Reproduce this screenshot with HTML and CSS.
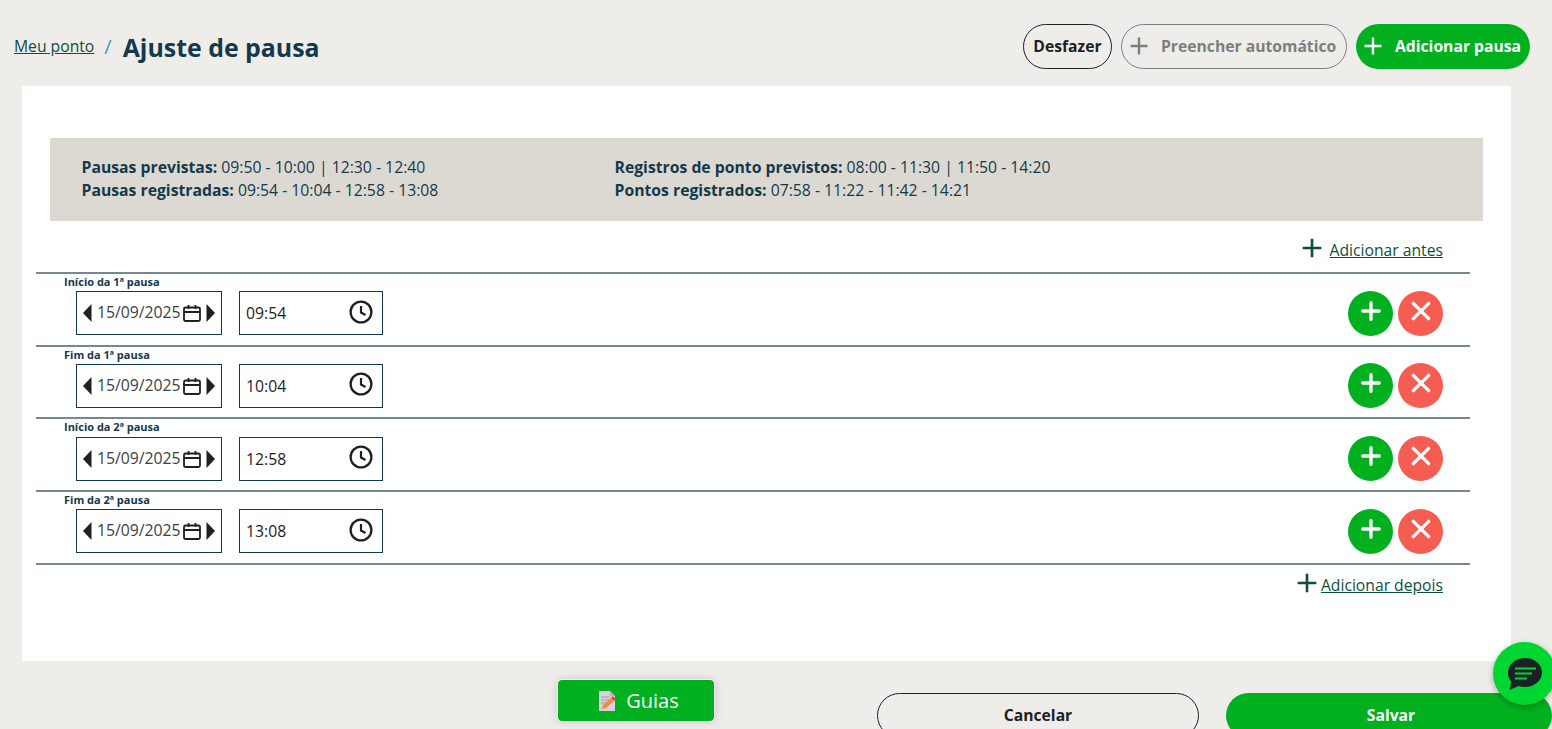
FILE: index.html
```html
<!DOCTYPE html>
<html lang="pt-BR">
<head>
  <meta charset="UTF-8">
  <meta name="viewport" content="width=device-width, initial-scale=1">
  <title>Ajuste de pausa</title>
  <link rel="stylesheet" href="styles.css">
</head>
<body>
  <svg class="sprites" width="0" height="0">
    <symbol id="i-plus" viewBox="0 0 20 20"><path d="M10 1.500v17M1.500 10h17" fill="none" stroke="currentColor" stroke-width="2.400"/></symbol>
    <symbol id="i-left" viewBox="0 0 9 18"><path d="M8.500 0v18L0 9z" fill="currentColor"/></symbol>
    <symbol id="i-right" viewBox="0 0 9 18"><path d="M.5 0v18L9 9z" fill="currentColor"/></symbol>
    <symbol id="i-cal" viewBox="0 0 18 18"><path d="M2.500 3.500h13a1.500 1.500 0 0 1 1.500 1.500v10.500a1.500 1.500 0 0 1-1.500 1.500h-13A1.500 1.500 0 0 1 1 15.500V5a1.500 1.500 0 0 1 1.500-1.500zM1 8h16M5.500 1v4M12.500 1v4" fill="none" stroke="currentColor" stroke-width="1.800"/></symbol>
    <symbol id="i-clock" viewBox="0 0 24 24"><circle cx="12" cy="12" r="10.400" fill="none" stroke="currentColor" stroke-width="2.300"/><path d="M12 6v6.500l4.500 2.500" fill="none" stroke="currentColor" stroke-width="2.200"/></symbol>
    <symbol id="i-x" viewBox="0 0 20 20"><path d="M3 3l14 14M17 3L3 17" fill="none" stroke="currentColor" stroke-width="3" stroke-linecap="round"/></symbol>
    <symbol id="i-add" viewBox="0 0 20 20"><path d="M10 2.500v15M2.500 10h15" fill="none" stroke="currentColor" stroke-width="3" stroke-linecap="round"/></symbol>
  </svg>

  <header class="top">
    <nav class="crumbs">
      <a href="#" class="crumb-link">Meu ponto</a>
      <span class="crumb-sep">/</span>
      <h1>Ajuste de pausa</h1>
    </nav>
    <div class="actions">
      <button class="pill pill-outline">Desfazer</button>
      <button class="pill pill-muted"><svg class="pill-icon"><use href="#i-plus"/></svg>Preencher automático</button>
      <button class="pill pill-green"><svg class="pill-icon"><use href="#i-plus"/></svg>Adicionar pausa</button>
    </div>
  </header>

  <main class="card">
    <section class="summary">
      <div class="summary-col">
        <p><b>Pausas previstas:</b> 09:50 - 10:00 | 12:30 - 12:40</p>
        <p><b>Pausas registradas:</b> 09:54 - 10:04 - 12:58 - 13:08</p>
      </div>
      <div class="summary-col">
        <p><b>Registros de ponto previstos:</b> 08:00 - 11:30 | 11:50 - 14:20</p>
        <p><b>Pontos registrados:</b> 07:58 - 11:22 - 11:42 - 14:21</p>
      </div>
    </section>

    <div class="add-line add-before">
      <svg class="add-icon"><use href="#i-plus"/></svg>
      <a href="#">Adicionar antes</a>
    </div>

    <div class="rows">
      <div class="row">
        <label class="row-label">Início da 1ª pausa</label>
        <div class="row-body">
          <div class="field field-date">
            <svg class="arrow"><use href="#i-left"/></svg>
            <span>15/09/2025</span>
            <svg class="cal"><use href="#i-cal"/></svg>
            <svg class="arrow"><use href="#i-right"/></svg>
          </div>
          <div class="field field-time">
            <span>09:54</span>
            <svg class="clock"><use href="#i-clock"/></svg>
          </div>
          <div class="row-btns">
            <button class="round round-add"><svg><use href="#i-add"/></svg></button>
            <button class="round round-del"><svg><use href="#i-x"/></svg></button>
          </div>
        </div>
      </div>

      <div class="row">
        <label class="row-label">Fim da 1ª pausa</label>
        <div class="row-body">
          <div class="field field-date">
            <svg class="arrow"><use href="#i-left"/></svg>
            <span>15/09/2025</span>
            <svg class="cal"><use href="#i-cal"/></svg>
            <svg class="arrow"><use href="#i-right"/></svg>
          </div>
          <div class="field field-time">
            <span>10:04</span>
            <svg class="clock"><use href="#i-clock"/></svg>
          </div>
          <div class="row-btns">
            <button class="round round-add"><svg><use href="#i-add"/></svg></button>
            <button class="round round-del"><svg><use href="#i-x"/></svg></button>
          </div>
        </div>
      </div>

      <div class="row">
        <label class="row-label">Início da 2ª pausa</label>
        <div class="row-body">
          <div class="field field-date">
            <svg class="arrow"><use href="#i-left"/></svg>
            <span>15/09/2025</span>
            <svg class="cal"><use href="#i-cal"/></svg>
            <svg class="arrow"><use href="#i-right"/></svg>
          </div>
          <div class="field field-time">
            <span>12:58</span>
            <svg class="clock"><use href="#i-clock"/></svg>
          </div>
          <div class="row-btns">
            <button class="round round-add"><svg><use href="#i-add"/></svg></button>
            <button class="round round-del"><svg><use href="#i-x"/></svg></button>
          </div>
        </div>
      </div>

      <div class="row">
        <label class="row-label">Fim da 2ª pausa</label>
        <div class="row-body">
          <div class="field field-date">
            <svg class="arrow"><use href="#i-left"/></svg>
            <span>15/09/2025</span>
            <svg class="cal"><use href="#i-cal"/></svg>
            <svg class="arrow"><use href="#i-right"/></svg>
          </div>
          <div class="field field-time">
            <span>13:08</span>
            <svg class="clock"><use href="#i-clock"/></svg>
          </div>
          <div class="row-btns">
            <button class="round round-add"><svg><use href="#i-add"/></svg></button>
            <button class="round round-del"><svg><use href="#i-x"/></svg></button>
          </div>
        </div>
      </div>
    </div>

    <div class="add-line add-after">
      <svg class="add-icon"><use href="#i-plus"/></svg>
      <a href="#">Adicionar depois</a>
    </div>
  </main>

  <footer class="bottom">
    <button class="guias">
      <svg class="guias-icon" viewBox="0 0 18 20">
        <path d="M1 0h11l5 5v15H1z" fill="#d8d0dc"/>
        <path d="M12 0l5 5h-5z" fill="#b9aec2"/>
        <path d="M3 6h9M3 9h11M3 12h7" stroke="#a79bb0" stroke-width="1"/>
        <path d="M4 18l1-4 8-7 3 3-8 7z" fill="#f08a3c"/>
        <path d="M13 7l2-2 3 3-2 2z" fill="#e8483c"/>
      </svg>
      Guias
    </button>
    <button class="foot-btn foot-cancel">Cancelar</button>
    <button class="foot-btn foot-save">Salvar</button>
  </footer>

  <button class="chat">
    <svg viewBox="0 0 34 32" width="34" height="32">
      <path d="M17 0c9.400 0 17 6.300 17 14.500S26.400 29 17 29c-2.300 0-4.500-.4-6.500-1L1.500 32l1.800-8.200C1.200 21.300 0 18 0 14.500 0 6.300 7.600 0 17 0z" fill="#1c2126"/>
      <path d="M7 10.500h21M7 15.500h17M7 20.500h12" stroke="#00d632" stroke-width="2"/>
    </svg>
  </button>
</body>
</html>
```

FILE: styles.css
```css
* { box-sizing: border-box; margin: 0; padding: 0; }

html, body {
  width: 1552px;
  height: 729px;
  overflow: hidden;
}

body {
  background: #efedea;
  color: #14394b;
  font-family: "Open Sans", "Liberation Sans", sans-serif;
  font-size: 15.75px;
}

button {
  font-family: inherit;
  cursor: pointer;
}

.sprites { display: block; height: 0; }

/* Header */
.top {
  display: flex;
  justify-content: space-between;
  align-items: center;
  height: 86px;
  padding: 6px 22px 0 14px;
}

.crumbs {
  display: flex;
  align-items: center;
}

.crumb-link {
  color: #0d4f3a;
  font-size: 15.7px;
  margin-top: -1px;
}

.crumb-sep {
  color: #3f9cc0;
  font-size: 20px;
  margin: 0 11px 0 10px;
}

h1 {
  font-size: 24.9px;
  font-weight: 700;
  line-height: 34px;
  margin-top: 1px;
}

.actions {
  display: flex;
  gap: 9px;
}

.pill {
  display: flex;
  align-items: center;
  height: 45px;
  border-radius: 23px;
  font-size: 15.7px;
  font-weight: 700;
  background: transparent;
  white-space: nowrap;
}

.pill-outline {
  width: 89px;
  justify-content: center;
  border: 1px solid #1c2126;
  color: #1c2126;
}

.pill-muted {
  width: 226px;
  padding-left: 7px;
  border: 1px solid #7c7f82;
  color: #7c7f82;
}

.pill-green {
  width: 174px;
  padding-left: 7px;
  border: 0;
  background: #00b01f;
  color: #fff;
}

.pill-icon {
  width: 20px;
  height: 20px;
  flex: none;
  margin-right: 12px;
}

/* Card */
.card {
  width: 1489px;
  height: 575px;
  margin-left: 22px;
  padding: 52px 41px 0 14px;
  background: #fff;
}

.summary {
  display: flex;
  height: 83px;
  margin: 0 -13px 0 14px;
  padding: 18px 31.5px 0;
  background: #dcd9d2;
  line-height: 23px;
}

.summary-col { width: 533px; }

.add-line {
  display: flex;
  justify-content: flex-end;
  align-items: center;
  padding-right: 27px;
  color: #0d4f3a;
  font-size: 15.7px;
}

.add-line a { color: #0d4f3a; }

.add-icon {
  width: 22px;
  height: 22px;
  margin-top: -3px;
}

.add-before {
  height: 50.75px;
  gap: 7px;
  padding-top: 7px;
}

.add-after {
  height: 40px;
  gap: 3px;
}

.rows {
  border-top: 2px solid #75878f;
}

.row {
  height: 72.75px;
  border-bottom: 2px solid #75878f;
}

.row-label {
  display: block;
  height: 16px;
  padding-left: 28px;
  font-size: 11px;
  font-weight: 700;
  line-height: 16px;
}

.row-body {
  display: flex;
  align-items: flex-start;
  padding: 1px 27px 0 40px;
}

.field {
  display: flex;
  align-items: center;
  height: 44px;
  margin-top: 0.25px;
  border: 1px solid #14394b;
  color: #1c2126;
}

.field-date {
  width: 146px;
  padding: 0 6px;
  color: #3a3f44;
}

.field-date span {
  margin: -2px 0 0 5px;
}

.arrow {
  width: 9px;
  height: 18px;
  flex: none;
  color: #1c2126;
}

.cal {
  width: 18px;
  height: 18px;
  flex: none;
  margin: 0 5px 0 auto;
  color: #1c2126;
}

.field-time {
  width: 144px;
  margin-left: 17px;
  padding: 0 9px 0 6px;
  justify-content: space-between;
}

.clock {
  width: 24px;
  height: 24px;
  margin-top: -3px;
}

.row-btns {
  display: flex;
  gap: 5px;
  margin: -0.25px 0 0 auto;
}

.round {
  display: flex;
  align-items: center;
  justify-content: center;
  width: 45px;
  height: 45px;
  border: 0;
  border-radius: 50%;
  color: #fff;
}

.round svg {
  width: 22px;
  height: 22px;
  margin-top: -5px;
}

.round-add { background: #00b01f; }
.round-del { background: #f55d52; }

/* Footer */
.bottom {
  display: flex;
  align-items: flex-start;
  width: 1552px;
  padding: 18px 0 0 557px;
}

.guias {
  display: flex;
  flex: none;
  align-items: center;
  justify-content: center;
  gap: 10px;
  width: 158px;
  height: 43px;
  padding-left: 5px;
  border: 1px solid #fff;
  border-radius: 5px;
  background: #00b01f;
  box-shadow: 0 0 8px rgba(0, 0, 0, 0.15);
  color: #fff;
  font-size: 20px;
}

.guias-icon {
  width: 18px;
  height: 20px;
}

.foot-btn {
  flex: none;
  width: 322px;
  height: 45px;
  margin-top: 14px;
  padding-bottom: 2px;
  border-radius: 23px;
  font-size: 15.7px;
  font-weight: 700;
}

.foot-cancel {
  margin-left: 162px;
  border: 1px solid #1c2126;
  background: transparent;
  color: #1c2126;
}

.foot-save {
  width: 326px;
  margin-left: 27px;
  padding-left: 4px;
  border: 0;
  background: #00b01f;
  color: #fff;
}

/* Chat bubble, floats over the page */
.chat {
  position: fixed;
  left: 1493px;
  top: 642px;
  display: flex;
  align-items: center;
  justify-content: center;
  width: 63px;
  height: 63px;
  border: 0;
  border-radius: 50%;
  background: #00d632;
  box-shadow: 0 2px 6px rgba(0, 0, 0, 0.3);
}
```
